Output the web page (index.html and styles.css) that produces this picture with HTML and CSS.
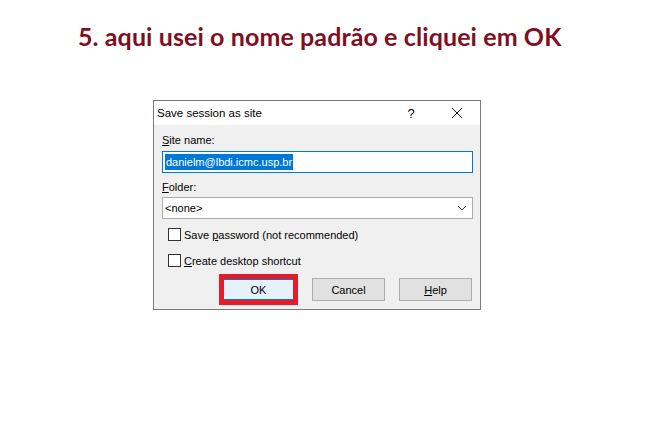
FILE: index.html
```html
<!DOCTYPE html>
<html lang="pt">
<head>
<meta charset="utf-8">
<title>Save session as site</title>
<link rel="stylesheet" href="styles.css">
</head>
<body>
<h1 class="caption">5. aqui usei o nome padrão e cliquei em OK</h1>
<div class="dialog">
  <div class="titlebar">
    <span class="title">Save session as site</span>
    <span class="help-btn">?</span>
    <span class="close-btn">
      <svg width="12" height="12" viewBox="0 0 12 12"><path d="M1 1 L11 11 M11 1 L1 11" stroke="#111" stroke-width="1" fill="none"/></svg>
    </span>
  </div>
  <div class="body">
    <div class="label"><u>S</u>ite name:</div>
    <div class="input focused"><span class="sel">danielm@lbdi.icmc.usp.br</span></div>
    <div class="label label-folder"><u>F</u>older:</div>
    <div class="input combo"><span>&lt;none&gt;</span>
      <svg class="chev" width="10" height="6" viewBox="0 0 10 6"><path d="M1 1 L5 5 L9 1" stroke="#444" stroke-width="1" fill="none"/></svg>
    </div>
    <div class="check first"><span class="box"></span><span>Save <u>p</u>assword (not recommended)</span></div>
    <div class="check"><span class="box"></span><span><u>C</u>reate desktop shortcut</span></div>
    <div class="buttons">
      <button class="btn ok">OK</button>
      <button class="btn">Cancel</button>
      <button class="btn"><u>H</u>elp</button>
    </div>
  </div>
</div>
</body>
</html>
```
FILE: styles.css
```css
html, body {
  margin: 0;
  padding: 0;
  background: #ffffff;
}
body {
  width: 670px;
  height: 441px;
  overflow: hidden;
}
.caption {
  margin: 0;
  padding: 21px 0 0 78px;
  font-family: Lato, "Open Sans", sans-serif;
  font-weight: 700;
  font-size: 25px;
  line-height: 30px;
  color: #7f0f1f;
  letter-spacing: 0.1px;
}
.dialog {
  margin: 49px 0 0 153px;
  width: 326px;
  height: 208px;
  border: 1px solid #7a7a7a;
  background: #f0f0f0;
  font-family: "Liberation Sans", Arial, sans-serif;
  font-size: 11px;
  color: #000;
  display: flex;
  flex-direction: column;
}
.titlebar {
  height: 24px;
  background: #ffffff;
  display: flex;
  align-items: center;
  padding-left: 3px;
}
.title {
  flex: 1;
  font-size: 11.5px;
}
.help-btn {
  width: 20px;
  text-align: center;
  font-size: 13px;
  margin-right: 26px;
}
.close-btn {
  width: 20px;
  display: flex;
  justify-content: center;
  margin-right: 13px;
}
.body {
  flex: 1;
  padding: 8px 7px 0 8px;
  display: flex;
  flex-direction: column;
}
.label {
  line-height: 15px;
  height: 15px;
}
.label-folder {
  margin-top: 7px;
}
.input {
  margin-top: 3px;
  height: 20px;
  border: 1px solid #adadad;
  background: #fff;
  display: flex;
  align-items: center;
  padding-left: 2px;
  position: relative;
}
.input.focused {
  border-color: #0078d7;
}
.sel {
  background: #0078d7;
  color: #fff;
  line-height: 16px;
  padding: 0 1px;
}
.combo {
  margin-top: 2px;
  justify-content: space-between;
  padding-right: 5px;
}
.chev {
  display: block;
}
.check {
  display: flex;
  align-items: center;
  gap: 3px;
  height: 13px;
  margin-left: 6px;
  margin-top: 13px;
}
.check.first {
  margin-top: 9px;
}
.box {
  width: 11px;
  height: 11px;
  border: 1px solid #333;
  background: #fff;
}
.buttons {
  margin-top: 11px;
  padding-right: 1px;
  display: flex;
  justify-content: flex-end;
  gap: 14px;
}
.btn {
  width: 73px;
  height: 23px;
  border: 1px solid #adadad;
  background: #e1e1e1;
  font-family: "Liberation Sans", Arial, sans-serif;
  font-size: 11px;
  color: #000;
  padding: 0;
  margin: 0;
}
.btn.ok {
  background: #e5f1fb;
  border: 2px solid #0078d7;
  margin-right: 3px;
  position: relative;
}
.btn.ok::after {
  content: "";
  position: absolute;
  left: -5px;
  top: -6px;
  right: -5px;
  bottom: -6px;
  border: 5px solid #e31b2b;
}
```
